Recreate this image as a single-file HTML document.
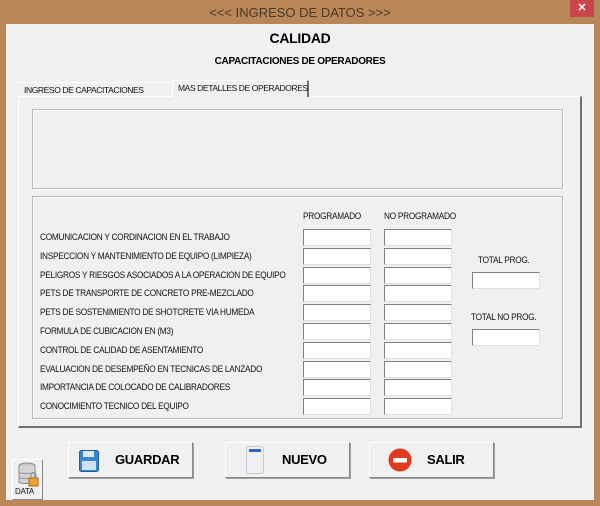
<!DOCTYPE html>
<html><head><meta charset="utf-8"><style>
*{margin:0;padding:0;box-sizing:border-box}
body{width:600px;height:506px;background:#b98658;position:relative;overflow:hidden;font-family:Tahoma,"Liberation Sans",sans-serif}
.abs{position:absolute}
.title{left:0;top:0;width:600px;height:24px;text-align:center;line-height:26px;font-size:13px;color:#4a3a2a}
.close{left:570px;top:0;width:24px;height:17px;background:#c9474a;color:#fff;font-size:11px;text-align:center;line-height:17px;font-weight:bold}
.client{left:6px;top:24px;width:588px;height:476px;background:#f0f0f0}
.b{font-weight:bold;color:#000}
.lab{font-size:9px;color:#111;white-space:nowrap;letter-spacing:-0.3px}
.rl{transform:scaleX(0.92);transform-origin:0 0}
.tb{width:68px;height:17px;background:#fff;border:1px solid #a0a0a0;border-top-color:#808080;border-left-color:#808080;border-right-color:#e0e0e0;border-bottom-color:#e0e0e0}
.frame{border:1px solid #b8b8b8;box-shadow:inset 1px 1px 0 #fff,1px 1px 0 #fff}
.btn{height:36px;width:125px;background:#f0f0f0;border:1px solid #fff;border-right-color:#888;border-bottom-color:#888;box-shadow:1px 1px 0 #a0a0a0;font-weight:bold;font-size:13px;line-height:34px;letter-spacing:-0.3px}
</style></head><body>
<div class="abs title">&lt;&lt;&lt; INGRESO DE DATOS &gt;&gt;&gt;</div>
<div class="abs close">✕</div>
<div class="abs client"></div>
<div class="abs b" style="left:0;width:600px;top:30px;text-align:center;font-size:14px;letter-spacing:-0.3px">CALIDAD</div>
<div class="abs b" style="left:0;width:600px;top:56px;text-align:center;font-size:10px;letter-spacing:-0.3px">CAPACITACIONES DE OPERADORES</div>
<div class="abs" style="left:18px;top:96px;width:564px;height:332px;border:1px solid #fff;border-right:2px solid #707070;border-bottom:2px solid #707070"></div>
<div class="abs lab" style="left:18px;top:82px;width:154px;height:15px;border-top:1px solid #fff;padding:2px 0 0 6px;font-size:8.5px;letter-spacing:-0.4px">INGRESO DE CAPACITACIONES</div>
<div class="abs lab" style="left:172px;top:80px;width:137px;height:17px;background:#f0f0f0;border-left:1px solid #fff;border-top:1px solid #fff;border-right:2px solid #707070;padding:2px 0 0 5px;font-size:8.5px;letter-spacing:-0.4px">MAS DETALLES DE OPERADORES</div>
<div class="abs frame" style="left:32px;top:109px;width:531px;height:80px"></div>
<div class="abs frame" style="left:32px;top:196px;width:531px;height:223px"></div>
<div class="abs lab rl" style="left:303px;top:211px">PROGRAMADO</div>
<div class="abs lab rl" style="left:384px;top:211px">NO PROGRAMADO</div>
<div class="abs lab rl" style="left:478px;top:255px">TOTAL PROG.</div>
<div class="abs tb" style="left:472px;top:272px"></div>
<div class="abs lab rl" style="left:471px;top:312px">TOTAL NO PROG.</div>
<div class="abs tb" style="left:472px;top:329px"></div>
<div id="rows"></div>
<script>
var L=["COMUNICACION Y CORDINACION EN EL TRABAJO","INSPECCION Y MANTENIMIENTO DE EQUIPO (LIMPIEZA)","PELIGROS Y RIESGOS ASOCIADOS A LA OPERACION DE EQUIPO","PETS DE TRANSPORTE DE CONCRETO PRE-MEZCLADO","PETS DE SOSTENIMIENTO DE SHOTCRETE VIA HUMEDA","FORMULA DE CUBICACION EN (M3)","CONTROL DE CALIDAD DE ASENTAMIENTO","EVALUACION DE DESEMPEÑO EN TECNICAS DE LANZADO","IMPORTANCIA DE COLOCADO DE CALIBRADORES","CONOCIMIENTO TECNICO DEL EQUIPO"];
var h="";for(var i=0;i<10;i++){var y=Math.round(229+i*18.8);h+='<div class="abs lab rl" style="left:40px;top:'+(y+3)+'px">'+L[i]+'</div><div class="abs tb" style="left:303px;top:'+y+'px"></div><div class="abs tb" style="left:384px;top:'+y+'px"></div>';}
document.getElementById("rows").innerHTML=h;
</script>
<div class="abs btn" style="left:68px;top:442px"><svg class="abs" style="left:10px;top:7px" width="20" height="22" viewBox="0 0 20 22"><rect x="0.5" y="0.5" width="19" height="21" rx="2" fill="#3a86c8" stroke="#1f5f9a"/><rect x="4" y="1" width="11" height="6" fill="#dfe8f0"/><rect x="3" y="11" width="14" height="9" fill="#cfe2f4"/></svg><span style="position:absolute;left:46px">GUARDAR</span></div>
<div class="abs btn" style="left:225px;top:442px"><svg class="abs" style="left:20px;top:3px" width="18" height="28" viewBox="0 0 18 28"><rect x="0.5" y="0.5" width="17" height="27" rx="2" fill="#eef0f4" stroke="#c8ccd2"/><rect x="3" y="3" width="12" height="3" fill="#2f6aa8"/></svg><span style="position:absolute;left:56px">NUEVO</span></div>
<div class="abs btn" style="left:369px;top:442px"><svg class="abs" style="left:18px;top:5px" width="24" height="24" viewBox="0 0 24 24"><circle cx="12" cy="12" r="11.5" fill="#e33a1e"/><rect x="5" y="10" width="14" height="4.5" rx="1" fill="#fff"/></svg><span style="position:absolute;left:57px">SALIR</span></div>
<div class="abs" style="left:12px;top:459px;width:31px;height:41px;border:1px solid #fff;border-right-color:#888;border-bottom-color:#888">
<svg class="abs" style="left:5px;top:2px" width="22" height="26" viewBox="0 0 22 26"><ellipse cx="9" cy="4" rx="8" ry="3" fill="#ccc" stroke="#888"/><path d="M1 4v16c0 2 16 2 16 0V4" fill="#d4d4d4" stroke="#888"/><path d="M1 10c0 2 16 2 16 0M1 15c0 2 16 2 16 0" fill="none" stroke="#999"/><rect x="11" y="16" width="9" height="8" fill="#f0a030" stroke="#b07010"/><path d="M13 16v-3a2.5 2.5 0 0 1 5 0v3" fill="none" stroke="#888"/></svg>
<div class="abs lab" style="left:2px;top:27px;font-size:8px">DATA</div></div>
</body></html>
